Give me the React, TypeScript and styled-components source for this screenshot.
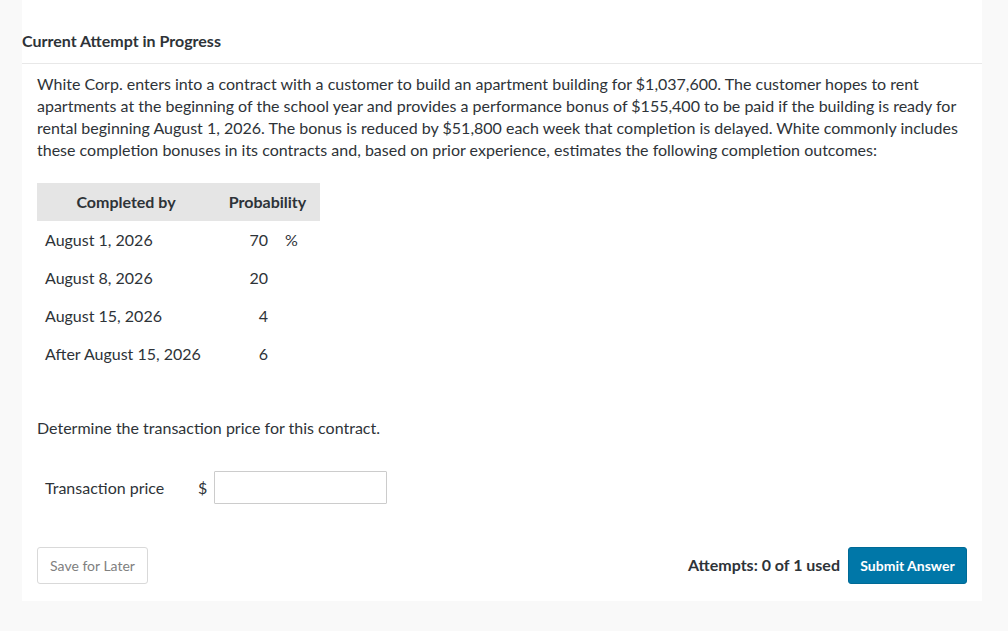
import React, { ReactElement } from 'react'
import styled, { createGlobalStyle } from 'styled-components'

const GlobalStyle = createGlobalStyle`
  html, body {
    margin: 0;
    padding: 0;
    background: #f9f9f9;
  }
  body {
    font-family: Lato, "Open Sans", "Liberation Sans", sans-serif;
    color: #333;
  }
  *, *::before, *::after {
    box-sizing: border-box;
  }
`

const Page = styled.div`
  width: 960px;
  margin-left: 22px;
  background: #fff;
  height: 601px;
  display: flex;
  flex-direction: column;
`

const Header = styled.h2`
  margin: 0;
  padding: 31px 0 13px 0;
  font-size: 16px;
  font-weight: 700;
  line-height: 19px;
  color: #2e3338;
  border-bottom: 1px solid #e8e8e8;
`

const Body = styled.div`
  padding: 9px 15px 0 15px;
  display: flex;
  flex-direction: column;
  flex: 1;
`

const Paragraph = styled.p`
  margin: 0;
  font-size: 16px;
  line-height: 22px;
  color: #2e3338;
`

const Table = styled.div`
  margin-top: 22px;
  display: grid;
  grid-template-columns: 178px 60px 45px;
  width: 283px;
  font-size: 16px;
  color: #2e3338;
`

const HeadCell = styled.div<{ $span?: number }>`
  background: #e5e5e5;
  height: 38px;
  display: flex;
  align-items: center;
  justify-content: center;
  padding-bottom: 2px;
  font-weight: 700;
  grid-column: span ${p => p.$span || 1};
`

const Cell = styled.div<{ $align?: 'left' | 'right' }>`
  height: 38px;
  display: flex;
  align-items: center;
  justify-content: ${p => (p.$align === 'right' ? 'flex-end' : 'flex-start')};
  padding: 0 7px 2px 8px;
`

const Unit = styled.div`
  height: 38px;
  display: flex;
  align-items: center;
  padding: 0 0 2px 10px;
`

const Prompt = styled(Paragraph)`
  margin-top: 44px;
`

const AnswerRow = styled.div`
  display: flex;
  align-items: center;
  margin-top: 32px;
  padding-left: 8px;
  font-size: 16px;
  color: #2e3338;
`

const AnswerLabel = styled.span`
  width: 153px;
`

const Currency = styled.span`
  width: 16px;
`

const AmountInput = styled.input`
  width: 173px;
  height: 33px;
  border: 1px solid #ccc;
  border-radius: 1px;
  font-family: inherit;
  font-size: 16px;
  padding: 0 6px;
  outline: none;
`

const Footer = styled.div`
  display: flex;
  align-items: center;
  justify-content: space-between;
  margin-top: 43px;
`

const SaveButton = styled.button`
  width: 111px;
  height: 37px;
  border: 1px solid #d9d9d9;
  border-radius: 3px;
  background: #fff;
  color: #808080;
  font-family: inherit;
  font-size: 14px;
  cursor: pointer;
`

const SubmitGroup = styled.div`
  display: flex;
  align-items: center;
  gap: 8px;
`

const Attempts = styled.span`
  font-size: 16px;
  font-weight: 700;
  color: #2e3338;
  margin-top: -3px;
`

const SubmitButton = styled.button`
  width: 119px;
  height: 37px;
  border: 1px solid #006a96;
  border-radius: 3px;
  background: #0077a8;
  color: #fff;
  font-family: inherit;
  font-size: 14px;
  font-weight: 700;
  cursor: pointer;
`

const outcomes = [
  { date: 'August 1, 2026', pct: '70', unit: '%' },
  { date: 'August 8, 2026', pct: '20', unit: '' },
  { date: 'August 15, 2026', pct: '4', unit: '' },
  { date: 'After August 15, 2026', pct: '6', unit: '' },
]

const App = (): ReactElement => {
  return (
    <>
      <GlobalStyle />
      <Page>
        <Header>Current Attempt in Progress</Header>
        <Body>
          <Paragraph>
            White Corp. enters into a contract with a customer to build an apartment building for $1,037,600. The
            customer hopes to rent apartments at the beginning of the school year and provides a performance bonus of
            $155,400 to be paid if the building is ready for rental beginning August 1, 2026. The bonus is reduced by
            $51,800 each week that completion is delayed. White commonly includes these completion bonuses in its
            contracts and, based on prior experience, estimates the following completion outcomes:
          </Paragraph>
          <Table>
            <HeadCell>Completed by</HeadCell>
            <HeadCell $span={2}>Probability</HeadCell>
            {outcomes.map(o => (
              <React.Fragment key={o.date}>
                <Cell>{o.date}</Cell>
                <Cell $align="right">{o.pct}</Cell>
                <Unit>{o.unit}</Unit>
              </React.Fragment>
            ))}
          </Table>
          <Prompt>Determine the transaction price for this contract.</Prompt>
          <AnswerRow>
            <AnswerLabel>Transaction price</AnswerLabel>
            <Currency>$</Currency>
            <AmountInput type="text" />
          </AnswerRow>
          <Footer>
            <SaveButton>Save for Later</SaveButton>
            <SubmitGroup>
              <Attempts>Attempts: 0 of 1 used</Attempts>
              <SubmitButton>Submit Answer</SubmitButton>
            </SubmitGroup>
          </Footer>
        </Body>
      </Page>
    </>
  )
}

export default App
